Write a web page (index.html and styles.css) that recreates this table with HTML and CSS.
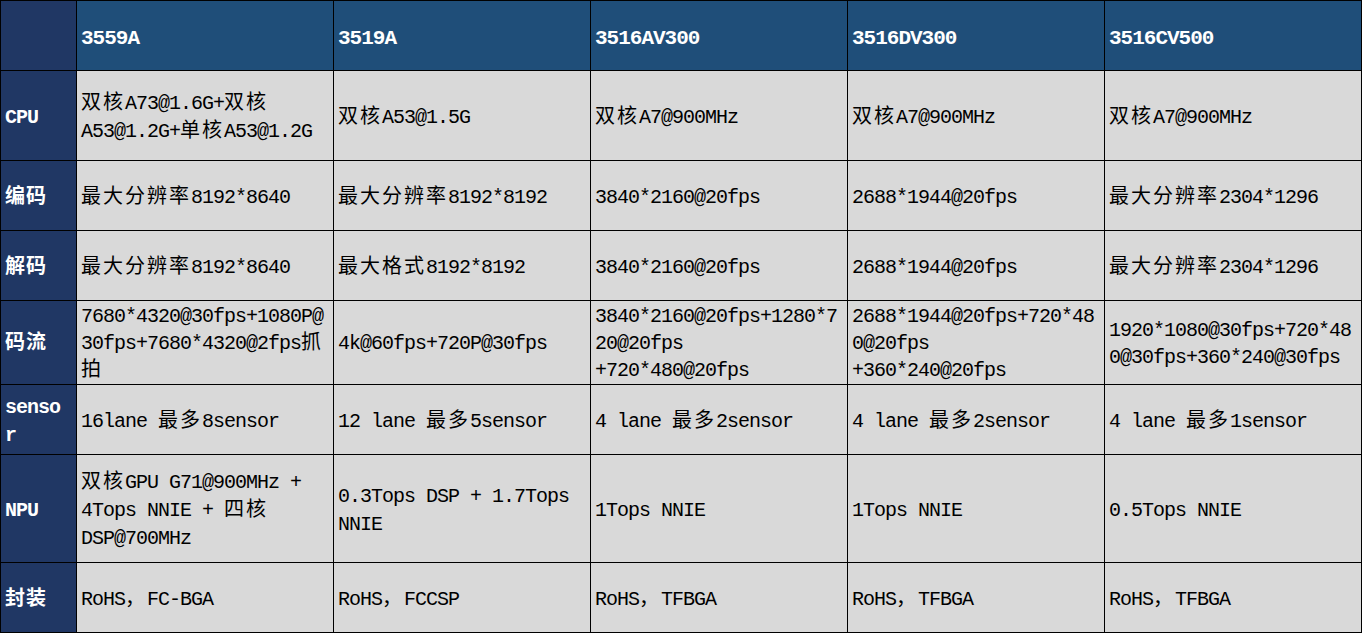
FILE: index.html
```html
<!DOCTYPE html>
<html lang="zh-CN">
<head>
<meta charset="utf-8">
<title>海思芯片对比</title>
<link rel="stylesheet" href="styles.css">
</head>
<body>
<table class="spec">
  <colgroup>
    <col class="col-label">
    <col class="col-data"><col class="col-data"><col class="col-data"><col class="col-data"><col class="col-data">
  </colgroup>
  <thead>
    <tr class="row-head">
      <th class="corner"></th>
      <th class="chip">3559A</th>
      <th class="chip">3519A</th>
      <th class="chip">3516AV300</th>
      <th class="chip">3516DV300</th>
      <th class="chip">3516CV500</th>
    </tr>
  </thead>
  <tbody>
    <tr class="row-cpu">
      <th class="label">CPU</th>
      <td><span class="c">双核</span>A73@1.6G+<span class="c">双核</span><br>A53@1.2G+<span class="c">单核</span>A53@1.2G</td>
      <td><span class="c">双核</span>A53@1.5G</td>
      <td><span class="c">双核</span>A7@900MHz</td>
      <td><span class="c">双核</span>A7@900MHz</td>
      <td><span class="c">双核</span>A7@900MHz</td>
    </tr>
    <tr class="row-std">
      <th class="label"><span class="lc">编码</span></th>
      <td><span class="c">最大分辨率</span>8192*8640</td>
      <td><span class="c">最大分辨率</span>8192*8192</td>
      <td>3840*2160@20fps</td>
      <td>2688*1944@20fps</td>
      <td><span class="c">最大分辨率</span>2304*1296</td>
    </tr>
    <tr class="row-std">
      <th class="label"><span class="lc">解码</span></th>
      <td><span class="c">最大分辨率</span>8192*8640</td>
      <td><span class="c">最大格式</span>8192*8192</td>
      <td>3840*2160@20fps</td>
      <td>2688*1944@20fps</td>
      <td><span class="c">最大分辨率</span>2304*1296</td>
    </tr>
    <tr class="row-stream">
      <th class="label"><span class="lc">码流</span></th>
      <td>7680*4320@30fps+1080P@<br>30fps+7680*4320@2fps<span class="c">抓</span><br><span class="c">拍</span></td>
      <td>4k@60fps+720P@30fps</td>
      <td>3840*2160@20fps+1280*7<br>20@20fps<br>+720*480@20fps</td>
      <td>2688*1944@20fps+720*48<br>0@20fps<br>+360*240@20fps</td>
      <td>1920*1080@30fps+720*48<br>0@30fps+360*240@30fps</td>
    </tr>
    <tr class="row-std">
      <th class="label">senso<br>r</th>
      <td>16lane <span class="c">最多</span>8sensor</td>
      <td>12 lane <span class="c">最多</span>5sensor</td>
      <td>4 lane <span class="c">最多</span>2sensor</td>
      <td>4 lane <span class="c">最多</span>2sensor</td>
      <td>4 lane <span class="c">最多</span>1sensor</td>
    </tr>
    <tr class="row-npu">
      <th class="label">NPU</th>
      <td><span class="c">双核</span>GPU G71@900MHz +<br>4Tops NNIE + <span class="c">四核</span><br>DSP@700MHz</td>
      <td>0.3Tops DSP + 1.7Tops<br>NNIE</td>
      <td>1Tops NNIE</td>
      <td>1Tops NNIE</td>
      <td>0.5Tops NNIE</td>
    </tr>
    <tr class="row-std">
      <th class="label"><span class="lc">封装</span></th>
      <td>RoHS<span class="c">，</span>FC-BGA</td>
      <td>RoHS<span class="c">，</span>FCCSP</td>
      <td>RoHS<span class="c">，</span>TFBGA</td>
      <td>RoHS<span class="c">，</span>TFBGA</td>
      <td>RoHS<span class="c">，</span>TFBGA</td>
    </tr>
  </tbody>
</table>
</body>
</html>
```

FILE: styles.css
```css
html, body {
  margin: 0;
  padding: 0;
  background: #ffffff;
}

.spec {
  border-collapse: collapse;
  table-layout: fixed;
  width: 1361px;
  font-family: "Liberation Mono", "Noto Sans CJK SC", monospace;
  font-size: 20px;
  letter-spacing: -1px;
  line-height: 28px;
  color: #000000;
}

.col-label { width: 76px; }
.col-data { width: 257px; }

.spec th,
.spec td {
  border: 1px solid #000000;
  padding: 5px 3px 0 4px;
  vertical-align: middle;
  text-align: left;
  white-space: nowrap;
  overflow: hidden;
}

.spec td {
  background: #d9d9d9;
}

.row-head th {
  height: 63px;
  padding-top: 6px;
  background: #1f4e79;
  color: #ffffff;
  font-size: 21px;
  font-weight: bold;
  letter-spacing: -1px;
}

.row-head .corner {
  background: #203764;
}

.label {
  background: #203764;
  color: #ffffff;
  font-weight: bold;
  letter-spacing: -1px;
}

.row-cpu th, .row-cpu td { height: 84px; }
.row-std th, .row-std td { height: 64px; }
.row-stream th, .row-stream td {
  height: 79px;
  padding-top: 2px;
  line-height: 27px;
}
.row-npu th, .row-npu td { height: 102px; }

.c {
  font-family: "Noto Sans CJK SC", sans-serif;
  font-size: 20px;
  line-height: 1;
  letter-spacing: 2px;
}

.lc {
  font-family: "Noto Sans CJK SC", sans-serif;
  font-size: 20px;
  line-height: 1;
  font-weight: bold;
  letter-spacing: 1px;
}
```
